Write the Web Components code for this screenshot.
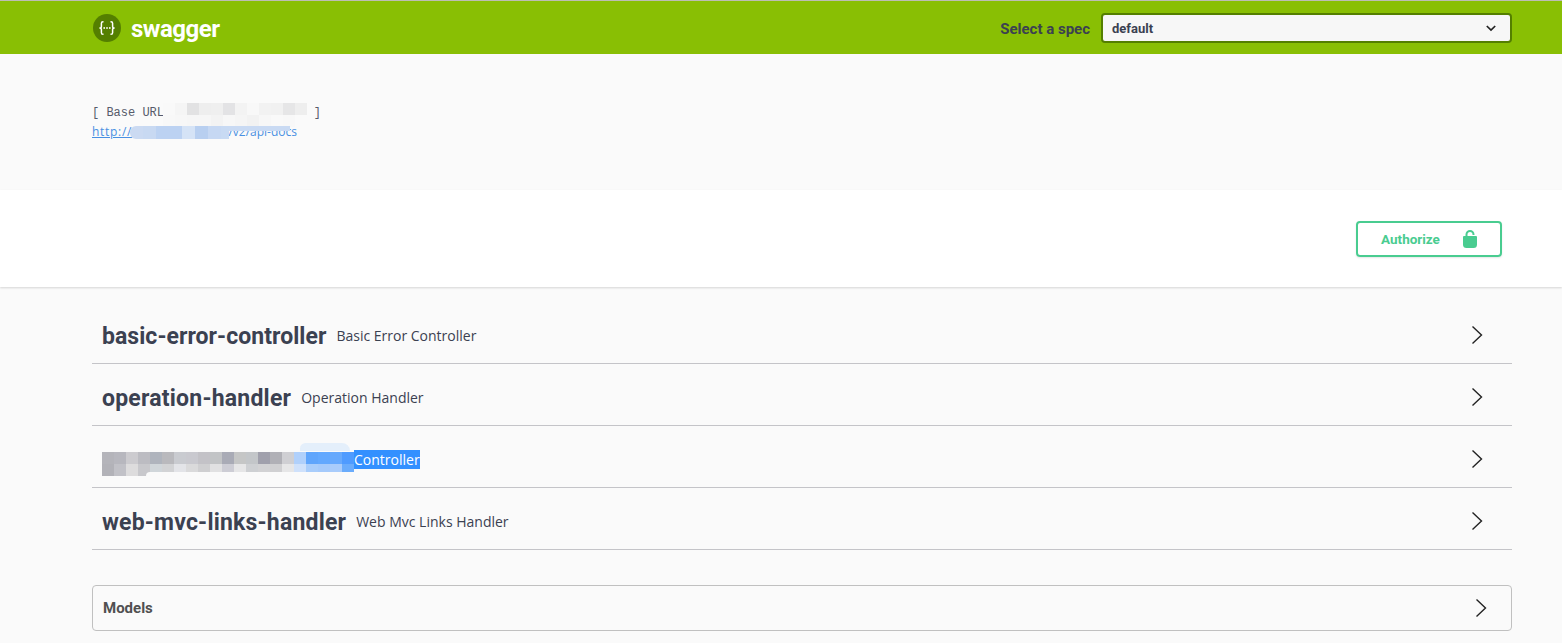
<!DOCTYPE html>
<html>
<head>
<meta charset="utf-8">
<title>Swagger UI</title>
<style>
  html, body { margin: 0; padding: 0; background: #fafafa; }
  body { font-family: "Open Sans", sans-serif; color: #3b4151; height: 643px; overflow: hidden; }
</style>
</head>
<body>
  <swagger-topbar></swagger-topbar>
  <api-info></api-info>
  <scheme-bar></scheme-bar>
  <tag-list>
    <op-tag name="basic-error-controller" spacing=".05">Basic Error Controller</op-tag>
    <op-tag name="operation-handler" spacing=".22">Operation Handler</op-tag>
    <op-tag masked>Controller</op-tag>
    <op-tag name="web-mvc-links-handler" spacing=".2">Web Mvc Links Handler</op-tag>
  </tag-list>
  <models-box></models-box>

<script>
const CHEVRON = /* html */`
  <svg width="20" height="20" viewBox="0 0 20 20" fill="none" stroke="#222" stroke-width="1.4">
    <path d="M5.5 1.5 L14.5 10 L5.5 18.5"/>
  </svg>`

class SwaggerTopbar extends HTMLElement {
  constructor () {
    super()
    this.attachShadow({ mode: 'open' }).innerHTML = /* html */`
      <style>
        :host {
          display: flex;
          align-items: center;
          justify-content: space-between;
          height: 53px;
          background: #89bf04;
          border-top: 1px solid #bdbdb5;
          padding: 0 50px 0 93px;
          box-sizing: content-box;
        }
        .logo { display: flex; align-items: center; gap: 10px; }
        .word { font: 700 24px/1 Roboto, sans-serif; color: #fff; letter-spacing: -0.5px; margin-top: 3px; }
        .spec { display: flex; align-items: center; gap: 11px; }
        label { font: 700 15px/1 Roboto, sans-serif; color: #3b4151; margin-top: 3px; }
        .select {
          display: flex;
          align-items: center;
          justify-content: space-between;
          width: 411px;
          height: 30px;
          box-sizing: border-box;
          margin-top: 1px;
          padding: 0 14px 0 9px;
          background: #f7f7f7;
          border: 2px solid #547f00;
          border-radius: 4px;
          font: 700 13px/1 Roboto, sans-serif;
          color: #3b4151;
        }
      </style>
      <div class="logo">
        <svg width="28" height="28" viewBox="0 0 28 28">
          <circle cx="14" cy="14" r="14" fill="#547f00"/>
          <g fill="none" stroke="#fff" stroke-width="1.5">
            <path d="M10.5 7.7 H10 Q8.4 7.7 8.4 9.3 V12.4 Q8.4 14 6.4 14 Q8.4 14 8.4 15.6 V18.7 Q8.4 20.3 10 20.3 H10.5"/>
            <path d="M17.5 7.7 H18 Q19.6 7.7 19.6 9.3 V12.4 Q19.6 14 21.6 14 Q19.6 14 19.6 15.6 V18.7 Q19.6 20.3 18 20.3 H17.5"/>
          </g>
          <g fill="#fff">
            <rect x="10.4" y="13.2" width="1.6" height="1.6"/>
            <rect x="13.2" y="13.2" width="1.6" height="1.6"/>
            <rect x="16" y="13.2" width="1.6" height="1.6"/>
          </g>
        </svg>
        <span class="word">swagger</span>
      </div>
      <div class="spec">
        <label>Select a spec</label>
        <div class="select">
          <span>default</span>
          <svg width="10" height="7" viewBox="0 0 10 7" fill="none" stroke="#222" stroke-width="1.7">
            <path d="M0.8 1 L5 5 L9.2 1"/>
          </svg>
        </div>
      </div>
    `
  }
}

// pixelated blur that hides parts of the screenshot
class PixelMask extends HTMLElement {
  connectedCallback () {
    const rows = this.getAttribute('cells').split('|').map(r => r.split(','))
    const size = this.getAttribute('size') || 12
    const root = this.shadowRoot || this.attachShadow({ mode: 'open' })
    root.innerHTML = `
      <style>
        :host { display: block; line-height: 0; }
        .row { display: flex; }
        i { display: block; width: ${size}px; height: ${size}px; flex: none; }
      </style>
      ${rows.map(r => `<div class="row">${r.map(c => `<i style="background:#${c}"></i>`).join('')}</div>`).join('')}
    `
  }
}

class ApiInfo extends HTMLElement {
  constructor () {
    super()
    this.attachShadow({ mode: 'open' }).innerHTML = /* html */`
      <style>
        :host {
          display: block;
          position: relative;
          height: 136px;
          box-sizing: border-box;
          padding: 51px 0 0 92px;
          background: #fafafa;
        }
        .base {
          display: flex;
          justify-content: space-between;
          width: 229px;
          font: 12px/16px "Liberation Mono", monospace;
          color: #565b6b;
        }
        a {
          display: block;
          width: 205px;
          margin-top: 3px;
          font: 12px/16px "Open Sans", sans-serif;
          color: #4990e2;
          text-decoration: underline;
          white-space: nowrap;
          position: relative;
        }
        a b { font-weight: 400; letter-spacing: .7px; }
        a span { position: absolute; right: 0; }
        .m1 { position: absolute; left: 163px; top: 49px; }
        .m2 { position: absolute; left: 130px; top: 72px; width: 99px; height: 13px; border-radius: 6px 0 0 6px; overflow: hidden; }
        .veil { position: absolute; left: 229px; top: 72px; width: 61px; height: 5px; background: #c9daf3; }
      </style>
      <div class="base"><span>[ Base URL</span><span>]</span></div>
      <a href="#"><b>http://</b><span>/v2/api-docs</span></a>
      <pixel-mask class="m1" size="12" cells="f9f9f9,f5f5f5,e2e2e3,eeeeee,efefef,e3e3e5,f3f3f3,f8f8f8,f2f2f2,f1f1f1,e6e6e7,eeeeee|f8f8f8,f7f7f7,f6f6f6,f6f6f6,f3f3f3,f7f7f7,f5f5f5,f2f2f2,f7f7f7,f9f9f9,f8f8f8,fafafa"></pixel-mask>
      <pixel-mask class="m2" size="13" cells="cbdaf2,c8d9f2,bcd2f2,bcd2f2,d5e3f6,b8cff0,c6d8f3,c8daf3"></pixel-mask>
      <div class="veil"></div>
    `
  }
}

class SchemeBar extends HTMLElement {
  constructor () {
    super()
    this.attachShadow({ mode: 'open' }).innerHTML = /* html */`
      <style>
        :host {
          display: flex;
          justify-content: flex-end;
          height: 97px;
          box-sizing: border-box;
          padding: 31px 60px 0 0;
          background: #fff;
          box-shadow: 0 1px 2px 0 rgba(0, 0, 0, .15);
          position: relative;
        }
        button {
          display: flex;
          align-items: center;
          width: 146px;
          height: 36px;
          box-sizing: border-box;
          padding: 0 0 0 23px;
          background: transparent;
          border: 2px solid #49cc90;
          border-radius: 4px;
          box-shadow: 0 1px 2px rgba(0, 0, 0, .1);
          color: #49cc90;
          font: 700 13.5px/1 Roboto, sans-serif;
        }
        button span { margin-top: 2px; }
        svg { margin-left: 23px; }
      </style>
      <button>
        <span>Authorize</span>
        <svg width="14" height="18" viewBox="0 0 14 18">
          <path d="M3.5 7 V4.5 A3.5 3.5 0 0 1 10.5 4.5 V5" fill="none" stroke="#49cc90" stroke-width="2"/>
          <path d="M0 7 Q0 6 1 6 H13 Q14 6 14 7 V14.5 Q14 18 10.5 18 H3.5 Q0 18 0 14.5 Z" fill="#49cc90"/>
        </svg>
      </button>
    `
  }
}

class TagList extends HTMLElement {
  constructor () {
    super()
    this.attachShadow({ mode: 'open' }).innerHTML = /* html */`
      <style>
        :host {
          display: block;
          margin: 15px 50px 0 92px;
        }
      </style>
      <slot></slot>
    `
  }
}

class OpTag extends HTMLElement {
  connectedCallback () {
    const name = this.getAttribute('name')
    const masked = this.hasAttribute('masked')
    const spacing = this.getAttribute('spacing') || 0
    const root = this.shadowRoot || this.attachShadow({ mode: 'open' })
    root.innerHTML = /* html */`
      <style>
        :host {
          display: flex;
          align-items: center;
          height: 62px;
          box-sizing: border-box;
          padding: 8px 25px 0 10px;
          border-bottom: 1px solid #c4c4c8;
          position: relative;
        }
        .name {
          font: 700 23px/1 Roboto, sans-serif;
          letter-spacing: ${spacing}px;
          color: #3b4151;
          margin-right: 10px;
        }
        .desc { font: 14px/19px "Open Sans", sans-serif; color: #3b4151; flex: none; margin-top: -2px; }
        .selected { background: #3390ff; color: #fff; margin-top: -3px; }
        .hide { margin-top: 6px; position: relative; }
        .hide::after {
          content: "";
          position: absolute;
          left: 44px;
          right: 0;
          bottom: 0;
          height: 4px;
          background: #fafafa;
          border-radius: 6px 0 0 0;
        }
        .blot {
          position: absolute;
          left: 208px;
          top: 17px;
          width: 50px;
          height: 8px;
          background: #e4effb;
          border-radius: 8px 12px 0 0;
        }
        svg { margin-left: auto; margin-top: -4px; }
      </style>
      ${masked
        ? `<pixel-mask class="hide" size="12" cells="b4b4ba,b7b7be,cccbcf,bcbcc2,afb4bd,b9b9bd,c9cbd0,c9c9cf,c3c2c7,c2c4c6,a9abb6,c5c6c6,c3c6c9,a0a0ac,b0b0b6,cfcfd3,b0d0fb,5fa5fc,62a8fe,66a9fd,4f9bff|b2b2b8,c1c1c7,dddcdd,c8c8cc,d0d6da,d2d3d5,e3e4e8,dadadb,cfcfd1,e1e1e2,cdcdd5,e6e6e7,ced0d3,d2d2d4,d0d0d2,e6e6e7,cfe1fb,a9cdfb,a5cafb,a9ccfb,6aacfc"></pixel-mask><div class="blot"></div>`
        : `<span class="name">${name}</span>`}
      <span class="desc${masked ? ' selected' : ''}"><slot></slot></span>
      ${CHEVRON}
    `
  }
}

class ModelsBox extends HTMLElement {
  constructor () {
    super()
    this.attachShadow({ mode: 'open' }).innerHTML = /* html */`
      <style>
        :host {
          display: flex;
          align-items: center;
          justify-content: space-between;
          height: 46px;
          box-sizing: border-box;
          margin: 35px 50px 0 92px;
          padding: 0 20px 0 10px;
          border: 1px solid #c0c0c0;
          border-radius: 4px;
        }
        h4 { margin: 0; font: 700 15px/1 Roboto, sans-serif; color: #505050; }
      </style>
      <h4>Models</h4>
      ${CHEVRON}
    `
  }
}

customElements.define('pixel-mask', PixelMask)
customElements.define('swagger-topbar', SwaggerTopbar)
customElements.define('api-info', ApiInfo)
customElements.define('scheme-bar', SchemeBar)
customElements.define('tag-list', TagList)
customElements.define('op-tag', OpTag)
customElements.define('models-box', ModelsBox)
</script>
</body>
</html>
